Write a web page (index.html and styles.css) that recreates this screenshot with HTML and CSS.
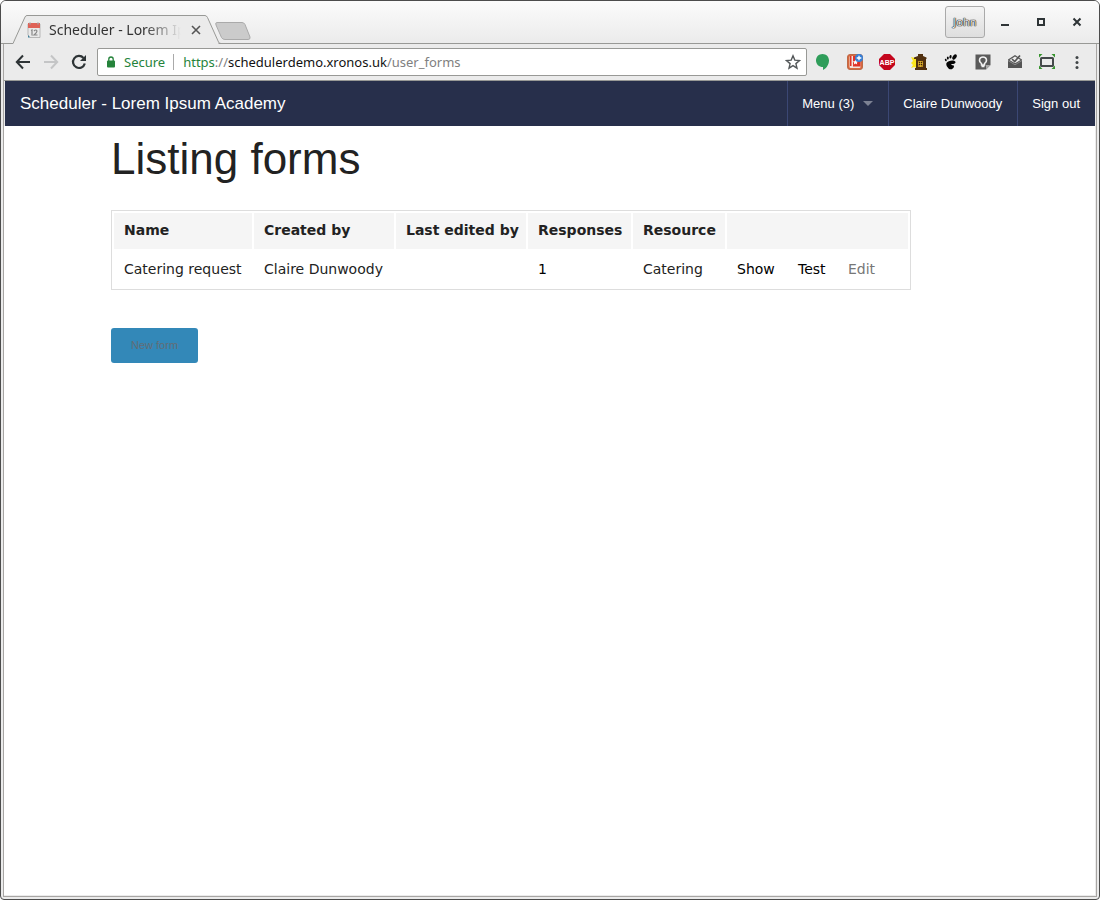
FILE: index.html
```html
<!DOCTYPE html>
<html lang="en">
<head>
<meta charset="utf-8">
<title>Scheduler - Lorem Ipsum Academy</title>
<link rel="stylesheet" href="styles.css">
</head>
<body>
<div class="window">
  <header class="titlebar">
    <div class="tab">
      <svg class="tab-shape" width="242" height="30" viewBox="0 0 242 30" aria-hidden="true">
        <path d="M8 28.500L20 2Q20.700 .5 22 .5H200Q201.500 .5 202.500 2.500L213.500 27V30H8Z" fill="#ebebeb"/>
        <path d="M0 28.500H8L20 2Q20.700 .5 22 .5H200Q201.500 .5 202.500 2.500L213.500 27Q214 28.500 216 28.500H242" fill="none" stroke="#989996"/>
      </svg>
      <svg class="favicon" width="14" height="16" viewBox="0 0 14 16" aria-hidden="true">
        <path d="M1 2h12v13.500H3L1 13z" fill="#e9e9e9" stroke="#aaa" stroke-width=".8"/>
        <path d="M1 1h12v5H1z" fill="#df6257"/><path d="M3 .5v2M11 .5v2" stroke="#a9a0a0" stroke-width="1.500"/>
        <path d="M4 8.500l1-.5v5.500M7 9q2-2 3 0q0 1.500-3 4h3.500" fill="none" stroke="#888" stroke-width="1.200"/>
        <path d="M1 13l2 2.500H1z" fill="#3d7f9c"/>
      </svg>
      <span class="tab-title">Scheduler - Lorem Ip</span>
      <button class="tab-close" aria-label="Close tab"><svg width="10" height="10" viewBox="0 0 10 10"><path d="M1 1l8 8M9 1L1 9" stroke="#555" stroke-width="1.600"/></svg></button>
    </div>
    <button class="new-tab" aria-label="New tab"><svg width="38" height="20" viewBox="0 0 38 20"><path d="M3 1.500H28Q30 1.500 31 3.500L36 16Q36.500 18.500 34 18.500H11Q8.500 18.500 7.500 16.500L2 4Q1 1.500 3 1.500Z" fill="#cbcbcb" stroke="#aaa"/></svg></button>
    <button class="profile">John</button>
    <div class="window-controls">
      <button aria-label="Minimise"><svg width="10" height="10" viewBox="0 0 10 10"><path d="M1 7h8v2H1z" fill="#2e3436"/></svg></button>
      <button aria-label="Maximise"><svg width="10" height="10" viewBox="0 0 10 10"><path d="M2 2h6v6H2z" fill="none" stroke="#2e3436" stroke-width="2"/></svg></button>
      <button aria-label="Close"><svg width="10" height="10" viewBox="0 0 10 10"><path d="M1.500 1.500l7 7M8.500 1.500l-7 7" stroke="#2e3436" stroke-width="2"/></svg></button>
    </div>
  </header>
  <div class="frame">
    <div class="toolbar">
      <div class="nav-buttons">
        <button aria-label="Back"><svg width="16" height="16" viewBox="0 0 16 16"><path d="M15 8H2M8 1.500L1.800 8L8 14.500" fill="none" stroke="#2e3436" stroke-width="2"/></svg></button>
        <button aria-label="Forward" disabled><svg width="16" height="16" viewBox="0 0 16 16"><path d="M1 8h13M8 1.500L14.200 8L8 14.500" fill="none" stroke="#c4c5c6" stroke-width="2"/></svg></button>
        <button aria-label="Reload"><svg width="16" height="16" viewBox="0 0 16 16"><path d="M12.500 4A6 6 0 1 0 13.800 9.500" fill="none" stroke="#2e3436" stroke-width="2.200"/><path d="M15 1v6H9z" fill="#2e3436"/></svg></button>
      </div>
      <div class="address">
        <svg width="10" height="12" viewBox="0 0 10 12" aria-hidden="true"><rect x="1" y="4.500" width="8" height="7" rx="1" fill="#25833b"/><path d="M2.800 5V3.200a2.200 2.200 0 0 1 4.400 0V5" fill="none" stroke="#25833b" stroke-width="1.300"/></svg>
        <span class="secure">Secure</span>
        <span class="url" role="textbox" aria-label="Address"><span class="scheme">https</span><span class="muted">://</span>schedulerdemo.xronos.uk<span class="muted">/user_forms</span></span>
        <button aria-label="Bookmark"><svg width="16" height="16" viewBox="0 0 16 16"><path d="M8 1.800l1.800 4.300 4.700.4-3.600 3.100 1.100 4.600L8 11.700l-4 2.500 1.100-4.600L1.500 6.500l4.700-.4z" fill="none" stroke="#54585a" stroke-width="1.400"/></svg></button>
      </div>
      <div class="extensions">
        <button aria-label="Hangouts"><svg width="16" height="16" viewBox="0 0 16 16"><path d="M7.500 0C3.800 0 1 2.800 1 6.500c0 3.800 3 6.500 7 6.500v3c3.300-1.500 6-5.500 6-9.500C14 2.800 11.200 0 7.500 0z" fill="#2f9d5a"/></svg></button>
        <button aria-label="Bookmarks"><svg width="16" height="16" viewBox="0 0 16 16"><rect x=".5" y=".5" width="15" height="15" rx="2.500" fill="#d9693f" stroke="#bd6a48"/><rect x="2.500" y="2" width="11" height="12" rx="1" fill="#f3e3dc"/><path d="M3 2h1.500v10H3zM6 2h7.500v10.500H6z" fill="#df3328"/><path d="M8.500 5.500l.8 1.700 1.900.2-1.400 1.300.4 1.900-1.700-1-1.700 1 .4-1.900-1.400-1.300 1.900-.2z" fill="#fff"/><circle cx="12" cy="4" r="4" fill="#3880d5"/><path d="M12 1.700v4.600M9.700 4h4.600" stroke="#fff" stroke-width="1.300"/></svg></button>
        <button aria-label="Adblock"><svg class="abp" width="16" height="16" viewBox="0 0 16 16"><path d="M5 0h6l5 5v6l-5 5H5l-5-5V5z" fill="#c4061d"/><text x="8" y="11" text-anchor="middle">ABP</text></svg></button>
        <button aria-label="Birdhouse"><svg width="16" height="16" viewBox="0 0 16 16"><path d="M0 3l4 1 2-1v11l-3-1-3 1 2-3-2-2 2-2z" fill="#fbe51d"/><path d="M3 5V3.500L7 2V0h5v2l3.500 1.500V5H15v9h1v2H4v-2h1V5z" fill="#51300f"/><path d="M7 7h5v6H7z" fill="#b98a20"/><path d="M8 8h3v3H8z" fill="#3b2209"/><path d="M9.500 7v6M7 9.500h5" stroke="#e9bd36" stroke-width=".7"/></svg></button>
        <button aria-label="Gnome"><svg width="16" height="16" viewBox="0 0 16 16" fill="#050505"><ellipse cx="11.500" cy="3" rx="1.800" ry="2.900" transform="rotate(35 11.500 3)"/><ellipse cx="7.500" cy="2.800" rx="1.100" ry="1.800" transform="rotate(10 7.500 2.800)"/><ellipse cx="4.800" cy="4" rx="1" ry="1.500"/><ellipse cx="2.800" cy="6" rx=".9" ry="1.300" transform="rotate(-20 2.800 6)"/><path d="M3.500 9C5 6 13 5.500 12.500 8.500C12 10.500 8.500 9.500 8.300 10.500C8.200 12 11 10.500 11 12.500C10.500 15.500 6.500 16.500 5 13.800C4 12.500 2.800 11 3.500 9z"/></svg></button>
        <button aria-label="Keep"><svg width="16" height="16" viewBox="0 0 16 16"><path d="M.5 .5h15v10.500l-4.500 4.500H.5z" fill="#5a5a5a"/><path d="M15.500 11H11v4.500z" fill="#aaa"/><path d="M6.500 9.500C3 7 4.500 3 8 3s5 4 1.500 6.500v1.500h-3zM6.500 12.500h3" fill="none" stroke="#f2f2f2" stroke-width="1.500"/></svg></button>
        <button aria-label="Mail"><svg width="16" height="16" viewBox="0 0 16 16"><path d="M1 5.500L8 1l7 4.500V14H1z" fill="#555"/><path d="M2.500 6L8 2.500l2 1.200L13.500 6 8 9.300z" fill="#ececec"/><path d="M5 5l2.700 2.500L13 1.500" fill="none" stroke="#555" stroke-width="1.700"/><path d="M1 6.500l7 4.300 7-4.300" fill="none" stroke="#aaa" stroke-width=".6"/></svg></button>
        <button aria-label="Screenshot"><svg width="16" height="16" viewBox="0 0 16 16"><rect x="2" y="4" width="12" height="8" rx=".5" fill="none" stroke="#454a4b" stroke-width="2"/><path d="M0 0h3.500L0 3.500zM16 0h-3.500L16 3.500zM0 15h3.500L0 11.500zM16 15h-3.500l3.500-3.500z" fill="#36942d"/></svg></button>
        <button class="more" aria-label="Browser menu"><svg width="4" height="16" viewBox="0 0 4 16" fill="#3f4446"><circle cx="2" cy="3.500" r="1.500"/><circle cx="2" cy="8.500" r="1.500"/><circle cx="2" cy="13.500" r="1.500"/></svg></button>
      </div>
    </div>
    <nav class="topbar">
      <a class="brand" href="#">Scheduler - Lorem Ipsum Academy</a>
      <a class="item" href="#">Menu (3)<span class="caret"></span></a>
      <a class="item" href="#">Claire Dunwoody</a>
      <a class="item" href="#">Sign out</a>
    </nav>
    <main class="page">
      <h1>Listing forms</h1>
      <table>
        <colgroup><col class="w-name"><col class="w-creator"><col class="w-editor"><col class="w-count"><col class="w-resource"><col class="w-show"><col class="w-test"><col class="w-edit"><col class="w-last"></colgroup>
        <thead>
          <tr><th>Name</th><th>Created by</th><th>Last edited by</th><th>Responses</th><th>Resource</th><th colspan="4"></th></tr>
        </thead>
        <tbody>
          <tr><td>Catering request</td><td>Claire Dunwoody</td><td></td><td><a href="#">1</a></td><td>Catering</td><td><a href="#">Show</a></td><td><a href="#">Test</a></td><td><a class="dim" href="#">Edit</a></td><td></td></tr>
        </tbody>
      </table>
      <a class="button" href="#">New form</a>
    </main>
  </div>
</div>
</body>
</html>
```
FILE: styles.css
```css
* { box-sizing: border-box; }
body { margin: 0; background: #fff; font-family: "Liberation Sans", Arial, sans-serif; }
button { border: 0; padding: 0; background: none; font: inherit; display: flex; align-items: center; justify-content: center; }
svg { display: block; flex: none; }
a { text-decoration: none; color: inherit; }

.window {
  min-height: 100vh;
  display: flex;
  flex-direction: column;
  border: 1px solid #4c4c4c;
  border-radius: 6px 6px 4px 4px;
  background: #ebebeb;
  overflow: hidden;
}

.titlebar {
  position: relative;
  height: 43px;
  flex: none;
  display: flex;
  align-items: center;
  padding: 0 14px 0 11px;
  border-bottom: 1px solid #989996;
  background: linear-gradient(#fbfbfb, #ebebeb);
}
.tab {
  position: relative;
  align-self: flex-end;
  width: 202px;
  height: 28px;
  display: flex;
  align-items: center;
  padding: 2px 11px 0 15px;
  gap: 8px;
}
.tab-shape { position: absolute; left: -7px; top: 0; clip-path: inset(0 26px 0 8px); }
.favicon, .tab-title, .tab-close { position: relative; }
.tab-title {
  flex: 1;
  overflow: hidden;
  white-space: nowrap;
  font: 14px/20px "Noto Sans", sans-serif;
  color: #333;
  -webkit-mask-image: linear-gradient(90deg, #000 72%, transparent);
  mask-image: linear-gradient(90deg, #000 72%, transparent);
}
.tab-close { width: 14px; height: 16px; }
.new-tab { align-self: flex-end; margin-bottom: 2px; }
.profile {
  margin-left: auto;
  width: 40px;
  height: 32px;
  border: 1px solid #aaa;
  border-radius: 3px;
  background: linear-gradient(#f4f4f4, #dedede);
  font: 11px/16px "Noto Sans", sans-serif;
  color: #e8e8e8;
  text-shadow: 0 0 1px #111, 0 0 1px #111, 0 0 1px #111;
}
.window-controls { display: flex; gap: 26px; margin: 0 3px 0 15px; }

.frame {
  flex: 1;
  display: flex;
  flex-direction: column;
  margin: 0 2px 2px;
  border: 1px solid #a8a6a4;
  border-top: 0;
  padding: 0 1px 1px 0;
}
.toolbar { height: 37px; flex: none; display: flex; align-items: center; padding: 0 10px 0 11px; border-bottom: 1px solid #989996; }
.nav-buttons { display: flex; gap: 12px; margin-right: 10px; }
.address {
  flex: 1;
  height: 28px;
  display: flex;
  align-items: center;
  border: 1px solid #989996;
  border-radius: 2px;
  padding: 0 5px 0 8px;
  background: #fff;
  font: 13px/20px "Noto Sans", sans-serif;
}
.secure { color: #25833b; margin: 0 8px; line-height: 16px; }
.url { flex: 1; border-left: 1px solid #aaa; padding-left: 9px; line-height: 16px; color: #111; }
.scheme { color: #25833b; }
.muted { color: #808080; }
.extensions { display: flex; gap: 16px; margin-left: 8px; }
.abp text { font: bold 7px "Liberation Sans", sans-serif; fill: #fff; }
.more { width: 16px; margin-left: -2px; }

.topbar { height: 45px; flex: none; display: flex; background: #272f4b; color: #fff; font-size: 13px; line-height: 45px; margin-left: 1px; }
.brand { margin-right: auto; padding-left: 15px; font-size: 17px; }
.item { display: flex; align-items: center; padding: 0 15px 0 14px; border-left: 1px solid #3b4774; }
.caret { margin-left: 9px; border: 5px solid transparent; border-top-color: #7d8293; border-bottom: 0; }

.page { flex: 1; background: #fff; padding: 2px 106px 0 107px; }
h1 { margin: 0 0 21px; font-size: 44px; line-height: 61px; font-weight: 400; color: #222; }
table { width: 800px; table-layout: fixed; border: 1px solid #ddd; border-spacing: 2px; font: 14px/18px "DejaVu Sans", Verdana, sans-serif; color: #222; }
th, td { padding: 9px 6px 9px 10px; text-align: left; white-space: nowrap; }
th { background: #f5f5f5; padding: 8px 6px 10px 10px; }
.w-name { width: 138px; }
.w-creator { width: 140px; }
.w-editor { width: 130px; }
.w-count { width: 103px; }
.w-resource { width: 92px; }
.w-show { width: 59px; }
.w-test { width: 48px; }
.w-edit { width: 48px; }
.w-last { width: 20px; }
td a { color: #000; }
td .dim { color: #777; }
.button {
  display: inline-block;
  margin-top: 38px;
  padding: 9px 20px 10px;
  border-radius: 3px;
  background: #3388b8;
  color: #626d75;
  font-size: 11px;
  line-height: 16px;
}
```
